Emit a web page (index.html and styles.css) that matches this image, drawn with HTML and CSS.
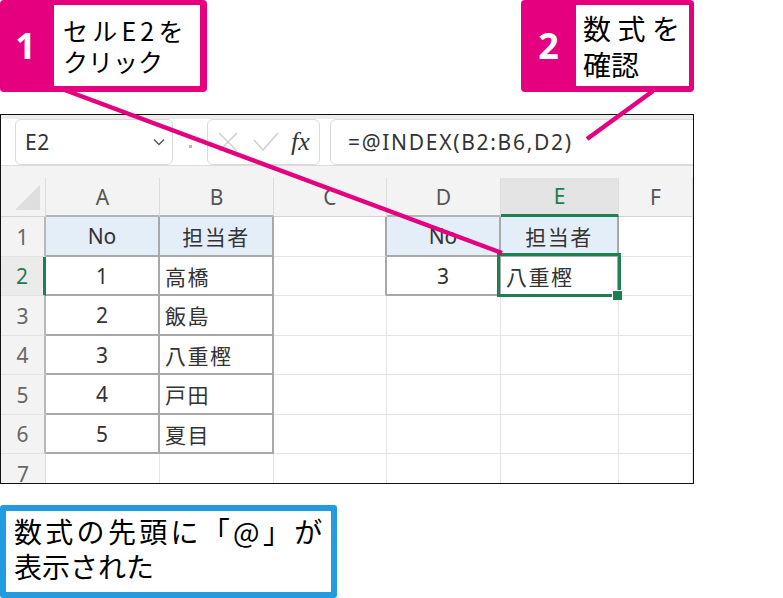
FILE: index.html
```html
<!DOCTYPE html>
<html lang="ja">
<head>
<meta charset="utf-8">
<link rel="stylesheet" href="styles.css">
</head>
<body>
<div class="page">
  <div class="top">
    <div class="callout c1">
      <div class="num">1</div>
      <div class="box"><span class="l1a">セルE2を</span><br>クリック</div>
    </div>
    <div class="callout c2">
      <div class="num">2</div>
      <div class="box"><span class="l2a">数式を</span><br>確認</div>
    </div>
  </div>

  <div class="sheet">
    <div class="fbar">
      <div class="namebox">
        <span>E2</span>
        <svg class="chev" width="12" height="8" viewBox="0 0 12 8"><polyline points="1,1.5 6,6.5 11,1.5" fill="none" stroke="#555" stroke-width="1.4"/></svg>
      </div>
      <div class="colon"><i></i><i></i></div>
      <div class="fxbox">
        <svg width="22" height="22" viewBox="0 0 22 22"><path d="M2 2 L20 20 M20 2 L2 20" stroke="#cfcfcf" stroke-width="1.5" fill="none"/></svg>
        <svg width="26" height="22" viewBox="0 0 26 22"><path d="M1 9 L10 19 L25 2" stroke="#cfcfcf" stroke-width="1.5" fill="none"/></svg>
        <span class="fx">fx</span>
      </div>
      <div class="formula">=@INDEX(B2:B6,D2)</div>
    </div>
    <div class="gridwrap">
      <div class="grid">
        <div class="corner"><span class="tri"></span></div>
        <div class="ch tb">A</div>
        <div class="ch tb">B</div>
        <div class="ch">C</div>
        <div class="ch tb">D</div>
        <div class="ch sel">E</div>
        <div class="ch">F</div>

        <div class="rh tl">1</div>
        <div class="c t hd ctr">No</div>
        <div class="c t hd ctr jp">担当者</div>
        <div class="c tl"></div>
        <div class="c t hd ctr">No</div>
        <div class="c t hd ctr jp">担当者</div>
        <div class="c"></div>

        <div class="rh tl rsel">2</div>
        <div class="c t ctr">1</div>
        <div class="c t jp">高橋</div>
        <div class="c tl"></div>
        <div class="c t ctr">3</div>
        <div class="c t jp active">八重樫<span class="handle"></span></div>
        <div class="c"></div>

        <div class="rh tl">3</div>
        <div class="c t ctr">2</div>
        <div class="c t jp">飯島</div>
        <div class="c"></div>
        <div class="c"></div>
        <div class="c"></div>
        <div class="c"></div>

        <div class="rh tl">4</div>
        <div class="c t ctr">3</div>
        <div class="c t jp">八重樫</div>
        <div class="c"></div>
        <div class="c"></div>
        <div class="c"></div>
        <div class="c"></div>

        <div class="rh tl">5</div>
        <div class="c t ctr">4</div>
        <div class="c t jp">戸田</div>
        <div class="c"></div>
        <div class="c"></div>
        <div class="c"></div>
        <div class="c"></div>

        <div class="rh tl">6</div>
        <div class="c t ctr">5</div>
        <div class="c t jp">夏目</div>
        <div class="c"></div>
        <div class="c"></div>
        <div class="c"></div>
        <div class="c"></div>

        <div class="rh">7</div>
        <div class="c"></div>
        <div class="c"></div>
        <div class="c"></div>
        <div class="c"></div>
        <div class="c"></div>
        <div class="c"></div>
      </div>
    </div>
  </div>

  <div class="note"><span class="l3a">数式の先頭に「@」が</span><br>表示された</div>

  <svg class="lines" width="783" height="598" viewBox="0 0 783 598">
    <line x1="62" y1="89" x2="502" y2="253" stroke="#e4007f" stroke-width="4.5"/>
    <line x1="653" y1="91" x2="587" y2="139" stroke="#e4007f" stroke-width="4.5"/>
  </svg>
</div>
</body>
</html>
```
FILE: styles.css
```css
html, body {
  margin: 0;
  padding: 0;
  background: #fff;
}
.page {
  position: relative;
  width: 783px;
  height: 598px;
  overflow: hidden;
  font-family: "Noto Sans CJK JP", "Noto Sans", sans-serif;
  color: #000;
}
.top {
  width: 694px;
  height: 92px;
  display: flex;
  justify-content: space-between;
}
.callout {
  display: flex;
  background: #e4007f;
  border-radius: 4px;
  box-sizing: border-box;
  height: 92px;
  padding: 5px 7px 6px 0;
}
.c1 { width: 207px; }
.c2 { width: 173px; padding-right: 5px; }
.num {
  width: 54px;
  flex: none;
  display: flex;
  align-items: center;
  justify-content: center;
  color: #fff;
  font-family: "Noto Sans", sans-serif;
  font-weight: 700;
  font-size: 36px;
  padding-right: 3px;
  box-sizing: border-box;
}
.c2 .num { width: 55px; padding-right: 0; }
.box {
  flex: 1;
  background: #fff;
  font-size: 25px;
  line-height: 31px;
  padding: 10px 0 0 9px;
  white-space: nowrap;
}
.l1a { letter-spacing: 4.2px; }
.c2 .box {
  font-size: 28px;
  line-height: 36px;
  padding: 5px 0 0 7px;
}
.l2a { letter-spacing: 6.5px; }

.sheet {
  margin-top: 22px;
  width: 694px;
  height: 370px;
  border: 1px solid #111;
  box-sizing: border-box;
  overflow: hidden;
  font-family: "Noto Sans", "Noto Sans CJK JP", sans-serif;
}
.fbar {
  height: 51px;
  box-sizing: border-box;
  border-bottom: 1px solid #dcdcdc;
  border-top: 4px solid #ececec;
  display: flex;
  padding: 0 0 0 14px;
  background: #fff;
}
.namebox, .fxbox, .formula {
  height: 46px;
  box-sizing: border-box;
  border: 1px solid #dadada;
  border-radius: 6px;
  background: #fff;
  display: flex;
  align-items: center;
}
.namebox {
  width: 158px;
  padding: 0 7px 0 9px;
  justify-content: space-between;
  font-size: 21px;
  letter-spacing: 0.5px;
  color: #333;
}
.colon {
  width: 34px;
  display: flex;
  flex-direction: column;
  align-items: center;
  justify-content: center;
  gap: 6px;
}
.colon i {
  display: block;
  width: 3px;
  height: 3px;
  background: #b8b8b8;
}
.fxbox {
  width: 113px;
  padding: 0 0 0 9px;
  gap: 14px;
}
.fx {
  font-family: "Liberation Serif", serif;
  font-style: italic;
  font-size: 26px;
  color: #333;
  margin-left: -2px;
}
.formula {
  flex: 1;
  margin-left: 10px;
  margin-right: -12px;
  padding-left: 17px;
  font-size: 21px;
  letter-spacing: 1.7px;
  color: #333;
}

.gridwrap {
  background: #f3f3f3;
  padding-top: 12px;
}
.grid {
  display: grid;
  grid-template-columns: 45px 114px 114px 113px 114px 118px 1fr;
  grid-template-rows: 39px 40px 39px 40px 39px 40px 39px 40px;
  font-size: 21px;
  color: #333;
}
.grid > div {
  box-sizing: border-box;
  display: flex;
  align-items: center;
}
.grid > .jp {
  font-size: 21px;
  letter-spacing: 1.5px;
}
.corner {
  background: #f3f3f3;
  border-right: 1px solid #dcdcdc;
  border-bottom: 1px solid #d4d4d4;
  position: relative;
}
.tri {
  position: absolute;
  right: 5px;
  bottom: 6px;
  width: 0;
  height: 0;
  border-left: 25px solid transparent;
  border-bottom: 25px solid #dedede;
}
.ch {
  background: #f3f3f3;
  justify-content: center;
  border-right: 1px solid #dcdcdc;
  border-bottom: 1px solid #d4d4d4;
  color: #555;
}
.ch.tb { border-bottom: 2px solid #b4b4b4; }
.ch.sel {
  background: #e4e4e4;
  color: #1e7d4b;
  border-bottom: 3px solid #1e8050;
}
.rh {
  background: #f3f3f3;
  justify-content: center;
  border-right: 1px solid #dcdcdc;
  border-bottom: 1px solid #e2e2e2;
  color: #666;
}
.rh.tl { border-right: 2px solid #b8b8b8; }
.rh.rsel {
  color: #1e7d4b;
  background: #ebebeb;
  border-right: 3px solid #1e8050;
}
.c {
  background: #fff;
  border-right: 1px solid #e4e4e4;
  border-bottom: 1px solid #e4e4e4;
  padding-left: 5px;
}
.c.tl { border-right: 2px solid #a8a8a8; }
.c.t {
  border-right: 2px solid #a8a8a8;
  border-bottom: 2px solid #a8a8a8;
}
.c.hd { background: #e3eef9; }
.c.ctr { justify-content: center; padding-left: 0; }
.active {
  position: relative;
}
.active::after {
  content: "";
  position: absolute;
  left: -4px;
  top: -4px;
  width: 124px;
  height: 44px;
  box-sizing: border-box;
  border: 3px solid #1e8050;
}
.handle {
  position: absolute;
  left: 111px;
  top: 33px;
  width: 10px;
  height: 10px;
  box-sizing: border-box;
  background: #1e8050;
  border-left: 1px solid #fff;
  border-top: 1px solid #fff;
  z-index: 2;
}

.note {
  margin-top: 21px;
  width: 337px;
  height: 93px;
  box-sizing: border-box;
  border: 6px solid #229be0;
  border-radius: 3px;
  font-size: 28px;
  line-height: 35px;
  padding: 3px 0 0 8px;
  white-space: nowrap;
}
.l3a { letter-spacing: 3.3px; }

.lines {
  position: absolute;
  left: 0;
  top: 0;
  pointer-events: none;
}
```
